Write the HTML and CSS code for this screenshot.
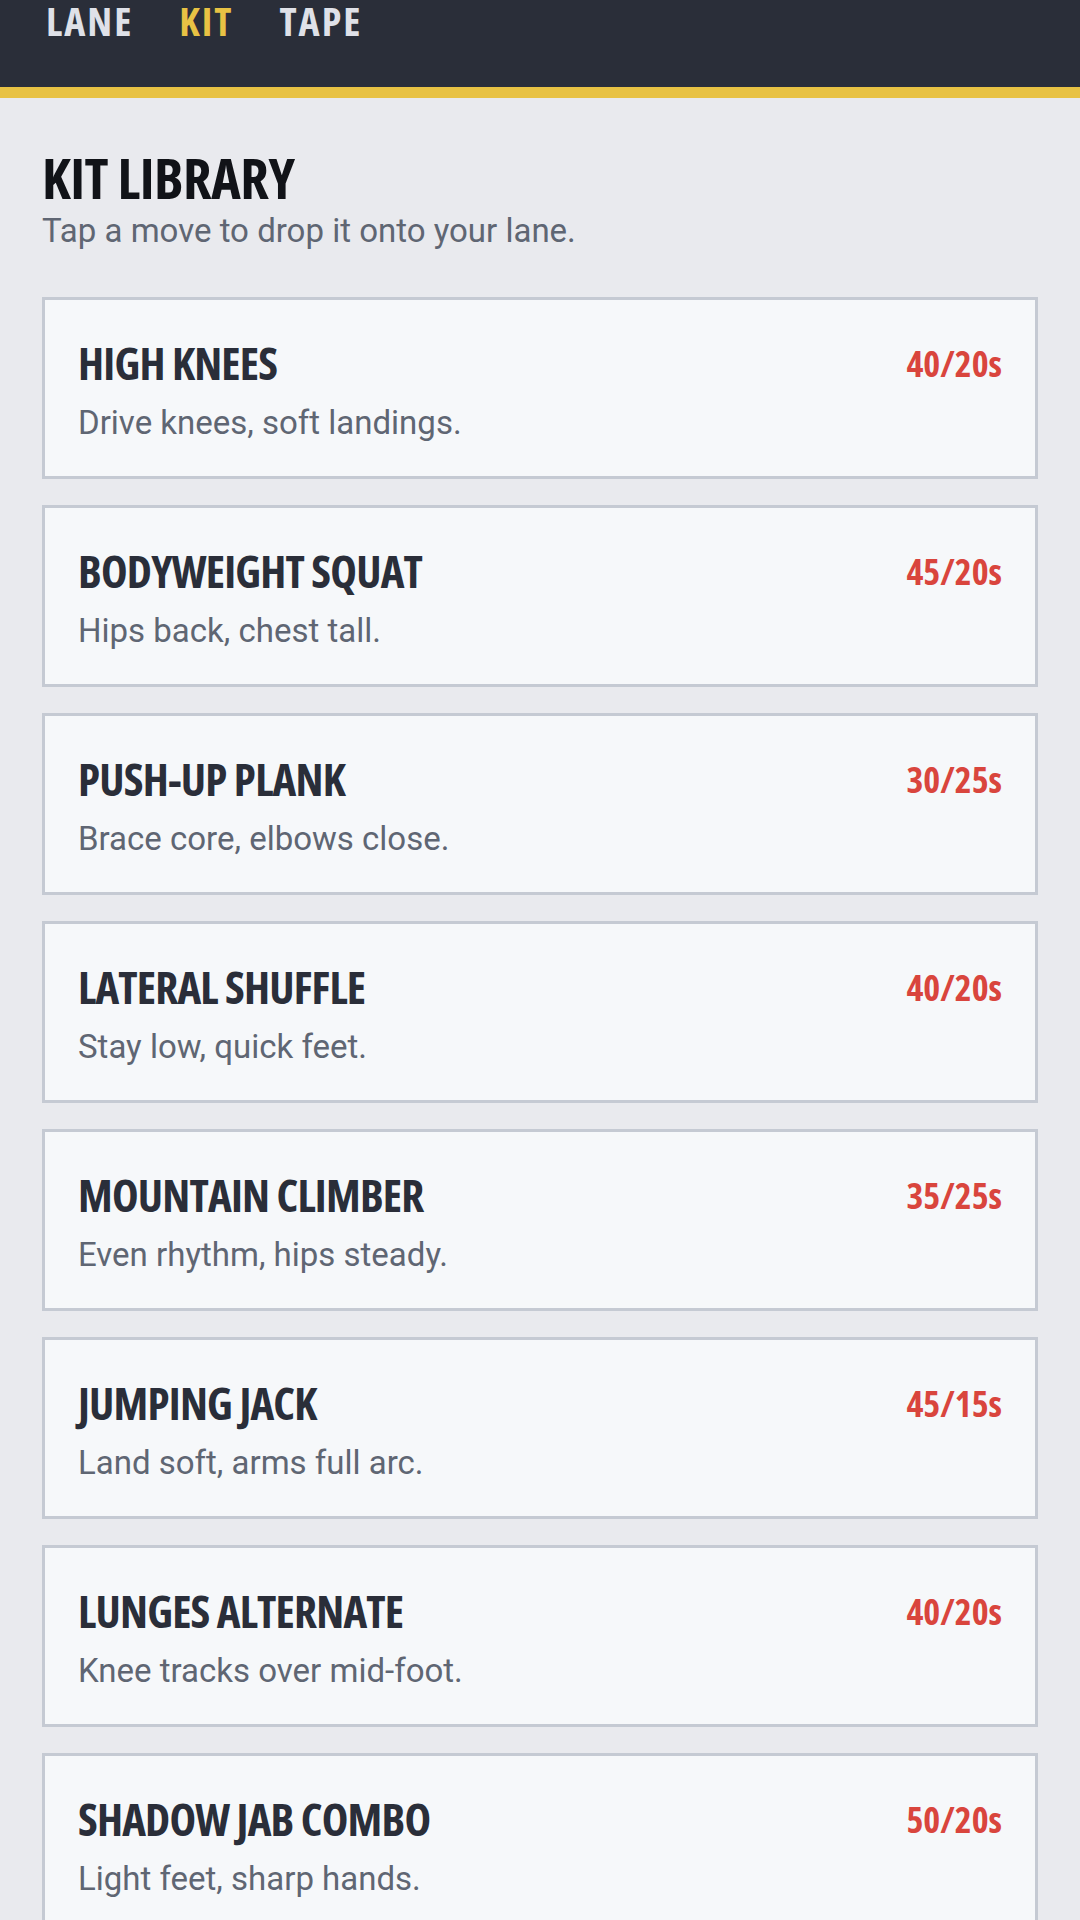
FILE: index.html
```html
<!DOCTYPE html>
<html lang="en">
<head>
    <meta charset="UTF-8" />
    <meta name="viewport" content="width=device-width, initial-scale=1.0"/>
    <title>Kit Library</title>
    <link rel="stylesheet" href="styles.css">
</head>
<body>

    <header class="topbar">
        <nav class="tabs">
            <a class="tab">LANE</a>
            <a class="tab active">KIT</a>
            <a class="tab">TAPE</a>
        </nav>
    </header>

    <main class="library">
        <h1>KIT LIBRARY</h1>
        <p class="lead">Tap a move to drop it onto your lane.</p>

        <ul class="moves">
            <li class="move">
                <div class="move-head"><span class="move-name">HIGH KNEES</span><span class="move-time">40/20s</span></div>
                <p class="move-cue">Drive knees, soft landings.</p>
            </li>
            <li class="move">
                <div class="move-head"><span class="move-name">BODYWEIGHT SQUAT</span><span class="move-time">45/20s</span></div>
                <p class="move-cue">Hips back, chest tall.</p>
            </li>
            <li class="move">
                <div class="move-head"><span class="move-name">PUSH-UP PLANK</span><span class="move-time">30/25s</span></div>
                <p class="move-cue">Brace core, elbows close.</p>
            </li>
            <li class="move">
                <div class="move-head"><span class="move-name">LATERAL SHUFFLE</span><span class="move-time">40/20s</span></div>
                <p class="move-cue">Stay low, quick feet.</p>
            </li>
            <li class="move">
                <div class="move-head"><span class="move-name">MOUNTAIN CLIMBER</span><span class="move-time">35/25s</span></div>
                <p class="move-cue">Even rhythm, hips steady.</p>
            </li>
            <li class="move">
                <div class="move-head"><span class="move-name">JUMPING JACK</span><span class="move-time">45/15s</span></div>
                <p class="move-cue">Land soft, arms full arc.</p>
            </li>
            <li class="move">
                <div class="move-head"><span class="move-name">LUNGES ALTERNATE</span><span class="move-time">40/20s</span></div>
                <p class="move-cue">Knee tracks over mid-foot.</p>
            </li>
            <li class="move">
                <div class="move-head"><span class="move-name">SHADOW JAB COMBO</span><span class="move-time">50/20s</span></div>
                <p class="move-cue">Light feet, sharp hands.</p>
            </li>
        </ul>
    </main>

</body>
</html>
```

FILE: styles.css
```css
* {
    box-sizing: border-box;
    margin: 0;
    padding: 0;
}

body {
    background: #e9eaee;
    font-family: Roboto, 'Liberation Sans', sans-serif;
    color: #2a2e39;
    overflow: hidden;
}

.topbar {
    background: #2a2e39;
    border-bottom: 11px solid #e8c244;
    height: 98px;
    padding: 1px 0 0 46px;
}

.tabs {
    display: flex;
    gap: 46px;
}

.tab,
h1,
.move-name,
.move-time {
    font-family: 'Open Sans', 'Roboto Condensed', sans-serif;
    font-stretch: 75%;
    font-weight: 700;
}

.tab {
    font-size: 40px;
    line-height: 40px;
    letter-spacing: 2px;
    color: #dfe1e8;
}

.tab.active {
    color: #e8c244;
}

.library {
    padding: 0 42px;
}

h1 {
    font-size: 56px;
    line-height: 64px;
    letter-spacing: -0.5px;
    color: #111318;
    margin-top: 47px;
}

.lead {
    font-size: 33px;
    line-height: 40px;
    color: #5f6673;
    margin-top: 2px;
}

.moves {
    list-style: none;
    display: flex;
    flex-direction: column;
    gap: 26px;
    margin-top: 46px;
}

.move {
    background: #f6f8fa;
    border: 3px solid #c5cad3;
    height: 182px;
    padding: 38px 33px 0 33px;
}

.move-head {
    display: flex;
    justify-content: space-between;
    align-items: flex-start;
}

.move-name {
    font-size: 45px;
    line-height: 50px;
    letter-spacing: -0.8px;
    color: #2a2e39;
}

.move-time {
    font-size: 36px;
    line-height: 44px;
    margin-top: 4px;
    color: #d9453d;
}

.move-cue {
    font-size: 33px;
    line-height: 40px;
    color: #5f6673;
    margin-top: 15px;
}
```
